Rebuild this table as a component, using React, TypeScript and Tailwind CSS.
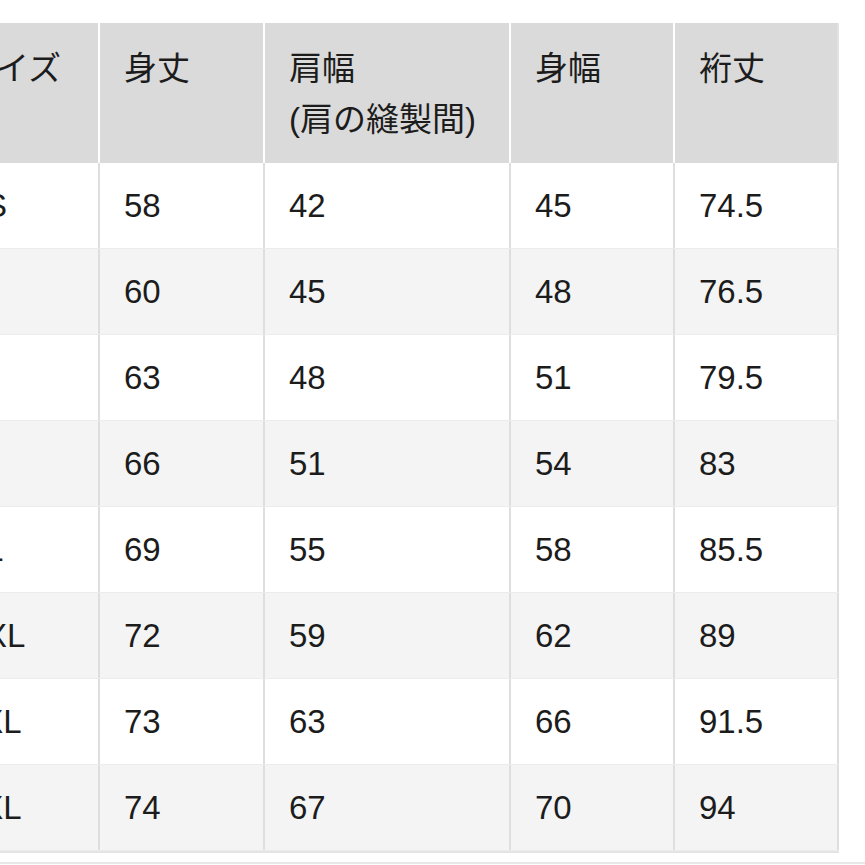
const headers: string[][] = [
  ['サイズ'],
  ['身丈'],
  ['肩幅', '(肩の縫製間)'],
  ['身幅'],
  ['裄丈'],
];

const rows: string[][] = [
  ['XS', '58', '42', '45', '74.5'],
  ['S', '60', '45', '48', '76.5'],
  ['M', '63', '48', '51', '79.5'],
  ['L', '66', '51', '54', '83'],
  ['XL', '69', '55', '58', '85.5'],
  ['XXL', '72', '59', '62', '89'],
  ['3XL', '73', '63', '66', '91.5'],
  ['4XL', '74', '67', '70', '94'],
];

export default function App() {
  return (
    <div
      className="w-[865px] h-[865px] overflow-hidden bg-white pt-[23px] text-[#1c1c1c]"
      style={{ fontFamily: '"Liberation Sans", "Noto Sans CJK JP", sans-serif' }}
    >
      <div className="ml-[-61px] w-[900px]">
        {/* header */}
        <div className="grid grid-cols-[161px_165px_246px_164px_164px]">
          {headers.map((lines, i) => (
            <div
              key={i}
              className="h-[140px] bg-[#dadada] border-r-2 border-white pl-6 pt-[20px] text-[33px] leading-[51px] last:border-[#e2e2e2]"
            >
              {lines.map((l) => (
                <div key={l} className="whitespace-nowrap">{l}</div>
              ))}
            </div>
          ))}
        </div>

        {/* body */}
        {rows.map((row, r) => (
          <div
            key={r}
            className={`grid grid-cols-[161px_165px_246px_164px_164px] h-[86px] border-b border-[#ececec] ${r % 2 === 1 ? 'bg-[#f4f4f4]' : 'bg-white'}`}
          >
            {row.map((cell, c) => (
              <div
                key={c}
                className="flex items-center border-r-2 border-[#dedede] pl-6 text-[33px] whitespace-nowrap"
              >
                {cell}
              </div>
            ))}
          </div>
        ))}
        <div className="h-[2px] w-[900px] bg-[#e4e4e4]" />
      </div>
      <div className="mt-[9px] h-[2px] w-full bg-[#e8e8e8]" />
    </div>
  );
}
